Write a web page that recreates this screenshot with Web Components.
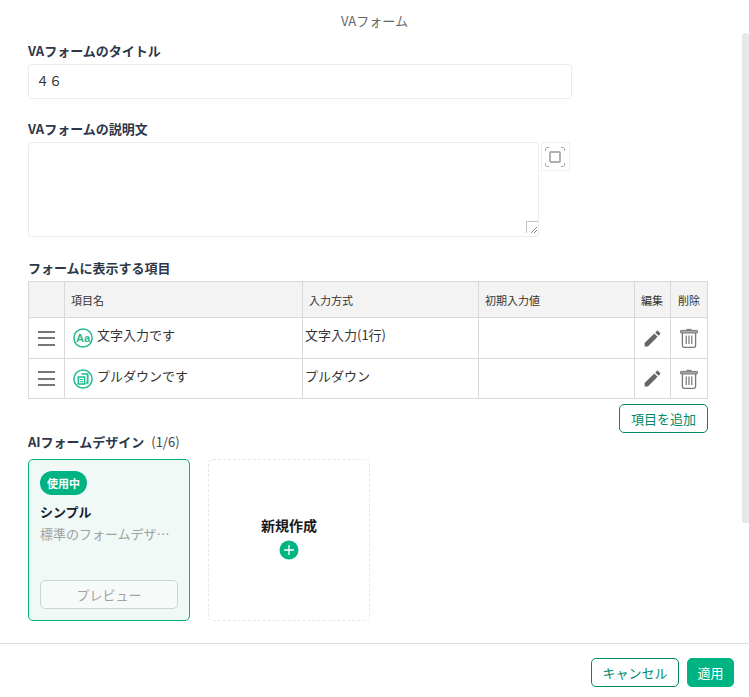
<!DOCTYPE html>
<html lang="ja">
<head>
<meta charset="utf-8">
<title>VAフォーム</title>
<style>
  html, body { margin: 0; background: #fff; }
  body {
    font-family: "Noto Sans CJK JP", "Noto Sans", sans-serif;
    font-size: 13px;
    color: #333;
  }
</style>
</head>
<body>

<va-dialog heading="VAフォーム">
  <va-field label="VAフォームのタイトル">
    <va-input value="４６"></va-input>
  </va-field>
  <va-field label="VAフォームの説明文" style="margin-top:21px">
    <va-textarea></va-textarea>
  </va-field>
  <va-field label="フォームに表示する項目" style="margin-top:22px">
    <va-items-table></va-items-table>
    <div style="display:flex;justify-content:flex-end;width:680px;margin-top:5px">
      <va-button variant="outline" style="width:89px">項目を追加</va-button>
    </div>
  </va-field>
  <va-field label="AIフォームデザイン" note="(1/6)" gap="8">
    <div style="display:flex;gap:18px">
      <va-design-card name="シンプル" desc="標準のフォームデザ…"></va-design-card>
      <va-new-card></va-new-card>
    </div>
  </va-field>

  <va-button slot="footer" variant="outline" style="width:88px">キャンセル</va-button>
  <va-button slot="footer" variant="solid" style="width:47px">適用</va-button>
</va-dialog>

<script>
/* --- icons, kept here because several elements use them --- */
const ICONS = {
  text: `<svg width="20" height="20" viewBox="0 0 20 20"><circle cx="10" cy="10" r="9.100" fill="#fff" stroke="#1dbb8e" stroke-width="1.500"/><text x="10" y="13.800" text-anchor="middle" font-family="'Liberation Sans',sans-serif" font-size="11" font-weight="700" fill="#1dbb8e">Aa</text></svg>`,
  pulldown: `<svg width="20" height="20" viewBox="0 0 20 20"><circle cx="10" cy="10" r="9.100" fill="#fff" stroke="#1dbb8e" stroke-width="1.500"/><path d="M8.500 5h6.200v9h-2" fill="none" stroke="#1dbb8e" stroke-width="1.700"/><rect x="5.300" y="8" width="6.300" height="7" fill="none" stroke="#1dbb8e" stroke-width="1.500"/><path d="M6.800 10.500h3.300M6.800 12.700h3.300" stroke="#1dbb8e" stroke-width="1.100"/></svg>`,
  pencil: `<svg width="21" height="21" viewBox="0 0 24 24" fill="#666"><path d="M3 17.250V21h3.750L17.810 9.940l-3.750-3.750L3 17.250zM20.710 7.040c.39-.39.39-1.020 0-1.410l-2.340-2.340c-.39-.39-1.020-.39-1.410 0l-1.830 1.830 3.750 3.750 1.830-1.830z"/></svg>`,
  trash: `<svg width="18" height="20" viewBox="0 0 18 20"><path d="M6.500 1.500h5" stroke="#888" stroke-width="1.400" fill="none"/><rect x=".5" y="2.400" width="17" height="2.600" rx=".6" fill="#aaa" stroke="#777"/><path d="M2.400 5v12.600c0 1 .6 1.700 1.600 1.700h10c1 0 1.600-.7 1.600-1.700V5" fill="none" stroke="#777" stroke-width="1.300"/><path d="M6.200 7.500v8.600M9 7.500v8.600M11.800 7.500v8.600" stroke="#777" stroke-width="1.200"/></svg>`,
  expand: `<svg width="20" height="20" viewBox="0 0 20 20" fill="none"><path d="M.5 4V2C.5 1.100 1.100.5 2 .5h2M16 .5h2c.9 0 1.500.6 1.500 1.500v2M19.500 16v2c0 .9-.6 1.500-1.500 1.500h-2M4 19.500H2c-.9 0-1.500-.6-1.500-1.500v-2" stroke="#a6a6a6"/><rect x="5" y="5" width="10" height="10" rx="1" stroke="#b0b0b8" stroke-width="2"/></svg>`
};

class VaDialog extends HTMLElement {
  constructor() {
    super();
    this.attachShadow({ mode: 'open' });
    this.shadowRoot.innerHTML = `
      <style>
        :host {
          display: flex;
          flex-direction: column;
          height: 697px;
          overflow: hidden;
        }
        .main {
          position: relative;
          height: 643px;
          box-sizing: border-box;
          padding: 0 28px;
        }
        header {
          height: 42px;
          line-height: 42px;
          text-align: center;
          color: #666;
          font-size: 13px;
        }
        /* scrollbar thumb lies over the content */
        .thumb {
          position: absolute;
          top: 33px;
          right: 0;
          width: 7px;
          height: 490px;
          background: #e8e8e8;
          border-radius: 3px 3px 0 0;
        }
        footer {
          display: flex;
          justify-content: flex-end;
          gap: 8px;
          height: 54px;
          box-sizing: border-box;
          padding: 14px 15px 0 0;
          border-top: 1px solid #dcdcdc;
        }
      </style>
      <div class="main">
        <header></header>
        <slot></slot>
        <div class="thumb"></div>
      </div>
      <footer><slot name="footer"></slot></footer>`;
    this.shadowRoot.querySelector('header').textContent = this.getAttribute('heading');
  }
}

class VaField extends HTMLElement {
  constructor() {
    super();
    this.attachShadow({ mode: 'open' });
    this.shadowRoot.innerHTML = `
      <style>
        :host { display: block; }
        .label {
          display: flex;
          align-items: flex-start;
          gap: 7px;
          height: 18px;
          box-sizing: border-box;
          padding-top: 1px;
          line-height: 16px;
          margin-bottom: ${this.getAttribute('gap') || 4}px;
          font-size: 13px;
          font-weight: 700;
          color: #2d3748;
        }
        .note { font-weight: 400; color: #444; font-size: 13px; }
      </style>
      <div class="label"><span class="t"></span><span class="note"></span></div>
      <slot></slot>`;
    this.shadowRoot.querySelector('.t').textContent = this.getAttribute('label');
    this.shadowRoot.querySelector('.note').textContent = this.getAttribute('note') || '';
  }
}

class VaInput extends HTMLElement {
  constructor() {
    super();
    this.attachShadow({ mode: 'open' });
    this.shadowRoot.innerHTML = `
      <style>
        :host { display: block; width: 544px; }
        input {
          display: block;
          width: 100%;
          height: 35px;
          box-sizing: border-box;
          padding: 0 7px 2px;
          border: 1px solid #ececec;
          border-radius: 3px;
          font: 13px "Noto Sans CJK JP", sans-serif;
          color: #333;
          outline: none;
        }
      </style>
      <input type="text">`;
    this.shadowRoot.querySelector('input').value = this.getAttribute('value') || '';
  }
}

class VaTextarea extends HTMLElement {
  constructor() {
    super();
    this.attachShadow({ mode: 'open' });
    this.shadowRoot.innerHTML = `
      <style>
        :host { display: flex; gap: 2px; align-items: flex-start; }
        .wrap { position: relative; width: 511px; height: 95px; }
        textarea {
          display: block;
          width: 100%;
          height: 100%;
          box-sizing: border-box;
          border: 1px solid #ececec;
          border-radius: 3px;
          resize: none;
          outline: none;
        }
        /* custom resize grip sits over the textarea corner */
        .grip {
          position: absolute;
          right: 1px;
          bottom: 4px;
          width: 12px;
          height: 12px;
          box-sizing: border-box;
          border: solid #c4c4c4;
          border-width: 1px 0 0 1px;
        }
        .grip svg { position: absolute; right: 1px; bottom: 0; display: block; }
        .expand {
          width: 29px;
          height: 29px;
          box-sizing: border-box;
          padding-right: 1px;
          display: flex;
          align-items: center;
          justify-content: center;
          border: 1px solid #f0f0f0;
          background: #fff;
        }
      </style>
      <div class="wrap">
        <textarea></textarea>
        <div class="grip"><svg width="6" height="6" viewBox="0 0 6 6"><path d="M0 6L6 0M3 6L6 3" stroke="#555" stroke-width="1" stroke-dasharray="1 .5"/></svg></div>
      </div>
      <div class="expand">${ICONS.expand}</div>`;
  }
}

class VaItemsTable extends HTMLElement {
  constructor() {
    super();
    this.attachShadow({ mode: 'open' });
    const rows = [
      { icon: 'text', name: '文字入力です', type: '文字入力(1行)', lift: 4 },
      { icon: 'pulldown', name: 'プルダウンです', type: 'プルダウン', lift: 3 }
    ];
    this.shadowRoot.innerHTML = `
      <style>
        :host { display: block; width: 680px; }
        table {
          width: 680px;
          table-layout: fixed;
          border-collapse: separate;
          border-spacing: 0;
          border-right: 1px solid #d9d9d9;
          border-bottom: 1px solid #d9d9d9;
          box-sizing: border-box;
        }
        th, td {
          box-sizing: border-box;
          border-left: 1px solid #d9d9d9;
          border-top: 1px solid #d9d9d9;
          padding: 0;
        }
        th {
          height: 36px;
          background: #f3f3f3;
          font-size: 11px;
          font-weight: 400;
          color: #333;
          text-align: left;
          padding-left: 6px;
        }
        th.c { text-align: center; padding: 0; }
        td { font-size: 13px; color: #333; }
        td.type { padding-left: 2px; }
        td.c { padding-right: 1px; }
        .grab {
          display: flex;
          flex-direction: column;
          gap: 4.500px;
          width: 17px;
          margin: 0 auto;
        }
        .grab i { display: block; height: 2px; background: #777; }
        .name { display: flex; align-items: center; gap: 4px; padding-left: 8px; }
        .name svg, td.c svg { display: block; }
        td.c svg { margin: 0 auto; }
        .lift { position: relative; }
      </style>
      <table>
        <colgroup>
          <col style="width:36px"><col style="width:238px"><col style="width:176px">
          <col style="width:156px"><col style="width:36px"><col style="width:37px">
        </colgroup>
        <thead><tr>
          <th></th><th>項目名</th><th>入力方式</th><th>初期入力値</th>
          <th class="c" style="padding-right:1px">編集</th><th class="c">削除</th>
        </tr></thead>
        <tbody>
          ${rows.map((r, i) => `
            <tr style="height:${i ? 40 : 41}px">
              <td><div class="grab"><i></i><i></i><i></i></div></td>
              <td><div class="name">${ICONS[r.icon]}<span class="lift" style="top:-${r.lift}px">${r.name}</span></div></td>
              <td class="type"><span class="lift" style="top:-${r.lift}px">${r.type}</span></td>
              <td></td>
              <td class="c">${ICONS.pencil}</td>
              <td class="c">${ICONS.trash}</td>
            </tr>`).join('')}
        </tbody>
      </table>`;
  }
}

class VaButton extends HTMLElement {
  constructor() {
    super();
    this.attachShadow({ mode: 'open' });
    this.shadowRoot.innerHTML = `
      <style>
        :host {
          display: block;
          height: 29px;
          box-sizing: border-box;
          border-radius: 5px;
          font-size: 13px;
          text-align: center;
          line-height: 27px;
          border: 1px solid #008a68;
          color: #008a68;
          background: #fff;
        }
        :host([variant="solid"]) {
          background: #00b383;
          border-color: #00b383;
          color: #fff;
        }
        :host([variant="ghost"]) {
          border-color: #c9d6d1;
          background: #f6fbf9;
          color: #a3a3a3;
        }
      </style>
      <slot></slot>`;
  }
}

class VaDesignCard extends HTMLElement {
  constructor() {
    super();
    this.attachShadow({ mode: 'open' });
    this.shadowRoot.innerHTML = `
      <style>
        :host {
          display: flex;
          flex-direction: column;
          width: 162px;
          height: 162px;
          box-sizing: border-box;
          padding: 11px;
          border: 1px solid #00b383;
          border-radius: 5px;
          background: #f0f9f6;
        }
        .badge {
          align-self: flex-start;
          width: 47px;
          height: 24px;
          line-height: 24px;
          border-radius: 12px;
          background: #00b383;
          color: #fff;
          font-size: 11px;
          font-weight: 700;
          text-align: center;
        }
        .name { margin-top: 7px; height: 20px; line-height: 20px; font-size: 13px; font-weight: 700; color: #1a202c; }
        .desc {
          margin-top: 2px;
          height: 20px;
          line-height: 20px;
          font-size: 13px;
          color: #a0a0a0;
          white-space: nowrap;
        }
        va-button { margin-top: auto; }
      </style>
      <div class="badge">使用中</div>
      <div class="name"></div>
      <div class="desc"></div>
      <va-button variant="ghost">プレビュー</va-button>`;
    this.shadowRoot.querySelector('.name').textContent = this.getAttribute('name');
    this.shadowRoot.querySelector('.desc').textContent = this.getAttribute('desc');
  }
}

class VaNewCard extends HTMLElement {
  constructor() {
    super();
    this.attachShadow({ mode: 'open' });
    this.shadowRoot.innerHTML = `
      <style>
        :host {
          display: flex;
          flex-direction: column;
          align-items: center;
          justify-content: center;
          gap: 5px;
          width: 162px;
          height: 162px;
          box-sizing: border-box;
          padding-bottom: 5px;
          border: 1px dashed #e3e8ee;
          border-radius: 5px;
        }
        .t { height: 20px; line-height: 20px; font-size: 14px; font-weight: 700; color: #1a1a1a; }
        svg { display: block; }
      </style>
      <div class="t">新規作成</div>
      <svg width="20" height="20" viewBox="0 0 20 20"><circle cx="10" cy="10" r="9.500" fill="#00b383"/><path d="M10 5v10M5 10h10" stroke="#fff" stroke-width="1.300"/></svg>`;
  }
}

customElements.define('va-dialog', VaDialog);
customElements.define('va-field', VaField);
customElements.define('va-input', VaInput);
customElements.define('va-textarea', VaTextarea);
customElements.define('va-items-table', VaItemsTable);
customElements.define('va-button', VaButton);
customElements.define('va-design-card', VaDesignCard);
customElements.define('va-new-card', VaNewCard);
</script>
</body>
</html>
